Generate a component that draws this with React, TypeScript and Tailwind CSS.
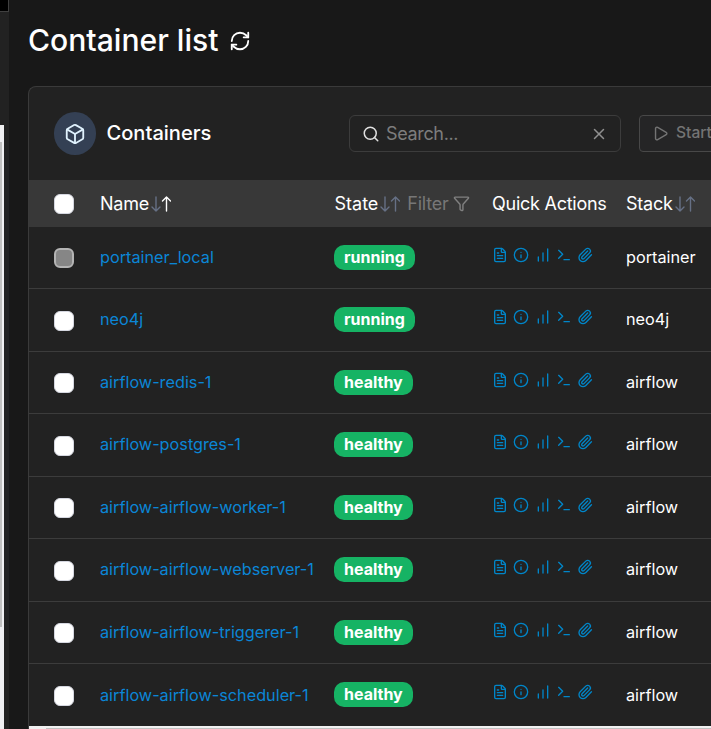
import React from "react";
import { RefreshCw, Box, Search, X, Play, Filter, FileText, Info, BarChart, Terminal, Paperclip } from "lucide-react";

const COLS = "grid grid-cols-[71px_234px_158px_134px_1fr]";

const rows = [
  { name: "portainer_local", state: "running", stack: "portainer", height: "h-[62px]", locked: true },
  { name: "neo4j", state: "running", stack: "neo4j", height: "h-[63px]" },
  { name: "airflow-redis-1", state: "healthy", stack: "airflow", height: "h-[62px]" },
  { name: "airflow-postgres-1", state: "healthy", stack: "airflow", height: "h-[63px]" },
  { name: "airflow-airflow-worker-1", state: "healthy", stack: "airflow", height: "h-[62px]" },
  { name: "airflow-airflow-webserver-1", state: "healthy", stack: "airflow", height: "h-[63px]" },
  { name: "airflow-airflow-triggerer-1", state: "healthy", stack: "airflow", height: "h-[62px]" },
  { name: "airflow-airflow-scheduler-1", state: "healthy", stack: "airflow", height: "h-[62px]" },
];

function Checkbox({ locked = false }: { locked?: boolean }) {
  return (
    <span
      className={
        locked
          ? "block size-5 rounded-[6px] border-2 border-[#b4b4b4] bg-[#868686]"
          : "block size-5 rounded-[6px] border border-[#d5d7e0] bg-white"
      }
    />
  );
}

function SortArrows({ ascending = false }: { ascending?: boolean }) {
  return (
    <svg
      className="ml-[2px] h-4 w-5 shrink-0 text-[#667085]"
      viewBox="0 0 20 16"
      fill="none"
      stroke="currentColor"
      strokeWidth={1.4}
      strokeLinecap="round"
      strokeLinejoin="round"
    >
      <path d="M5 1v14M1 11l4 4 4-4" />
      <path className={ascending ? "text-white" : ""} stroke="currentColor" d="M15.5 15V1M11.5 5l4-4 4 4" />
    </svg>
  );
}

function QuickActions() {
  return (
    <div className="flex items-center text-[#0086c9]">
      <FileText className="size-4" />
      <Info className="ml-[5px] size-4" />
      <BarChart className="ml-1.5 size-4" />
      <Terminal className="ml-[4.5px] size-4" />
      <Paperclip className="ml-[5px] size-4" />
    </div>
  );
}

export default function App() {
  return (
    <div className="flex h-[729px] w-[711px] overflow-hidden bg-[#181818] font-['Inter','Liberation_Sans',sans-serif] text-white">
      <aside className="flex w-[9px] shrink-0 flex-col bg-[#222222]">
        <div className="h-3 border-r border-b border-[#404040] bg-black" />
        <div className="h-[113px]" />
        <div className="w-1 flex-1 bg-[#f0f0f2] pt-[17px]">
          <div className="h-[485px] w-0.5 bg-[#c1c1c1]" />
        </div>
      </aside>
      <main className="flex min-w-0 flex-1 flex-col pl-[19px]">
        <div className="flex h-[86px] shrink-0 items-start gap-[11px] pt-5">
          <h1 className="text-[30.1px] leading-[41px] font-medium whitespace-nowrap">Container list</h1>
          <RefreshCw className="mt-[10px] size-[22px]" strokeWidth={2} />
        </div>
        <section className="flex flex-1 flex-col rounded-tl-[8px] border-t border-l border-[#3a3a3a] bg-[#222222]">
          <header className="flex h-[93px] shrink-0 items-center pl-[25px]">
            <div className="flex h-[43px] w-[42px] shrink-0 items-center justify-center rounded-full bg-[#344054] text-[#e0f2fe]">
              <Box className="size-[22px]" />
            </div>
            <h2 className="ml-[10.5px] w-[242.5px] shrink-0 pb-px text-[20.1px] leading-[30px] font-medium">Containers</h2>
            <div className="flex h-[37px] w-[272px] shrink-0 items-center rounded-[6px] border border-[#3c3c3c] px-3">
              <Search className="size-[18px] text-[#e0e0e0]" />
              <span className="ml-[6px] flex-1 pb-px text-[18px] tracking-[-0.35px] text-[#7d7d7d]">Search...</span>
              <X className="size-[18px] text-[#909090]" />
            </div>
            <div className="ml-[18px] flex h-[37px] w-[100px] shrink-0 items-center gap-[7px] rounded-[4px] border border-[#484848] bg-[#252526] pl-3 text-[#747474]">
              <Play className="size-[17px]" />
              <span className="pb-px text-[15.6px] font-medium">Start</span>
            </div>
          </header>
          <div className={`${COLS} h-[47px] shrink-0 items-center bg-[#383838] text-[18px] tracking-[-0.25px] whitespace-nowrap`}>
            <div className="pl-[25px]"><Checkbox /></div>
            <div className="flex items-center"><span className="pb-px">Name</span><SortArrows ascending /></div>
            <div className="flex items-center pl-[0.5px]">
              <span className="pb-px tracking-normal">State</span><SortArrows />
              <span className="ml-[7px] pb-px text-[#777777]">Filter</span>
              <Filter className="ml-[5px] size-[17px] text-[#808080]" />
            </div>
            <div className="pb-px">Quick Actions</div>
            <div className="flex items-center"><span className="pb-px">Stack</span><SortArrows /></div>
          </div>
          {rows.map((row) => (
            <div key={row.name} className={`group ${COLS} ${row.height} shrink-0 items-center border-b border-[#3c3c3c] whitespace-nowrap nth-last-2:border-0`}>
              <div className="pt-px pl-[25px] group-nth-last-2:pt-0.5"><Checkbox locked={row.locked} /></div>
              <div className="pb-px text-[16.25px] text-[#0b86d6] group-nth-last-2:pt-px">{row.name}</div>
              <div className="flex pb-px">
                <span className="inline-flex h-[25px] items-center rounded-[10px] bg-[#16b364] px-[10px] pb-px text-[16px] font-bold">{row.state}</span>
              </div>
              <div className="pb-[5.5px] group-nth-last-2:pb-1.5"><QuickActions /></div>
              <div className="pb-px text-[16.25px] group-nth-last-2:pt-px">{row.stack}</div>
            </div>
          ))}
          <div className="h-[3px] bg-[#f1f1f1] pt-0.5 pl-[17px]">
            <div className="h-px bg-[#c1c1c1]" />
          </div>
        </section>
      </main>
    </div>
  );
}
